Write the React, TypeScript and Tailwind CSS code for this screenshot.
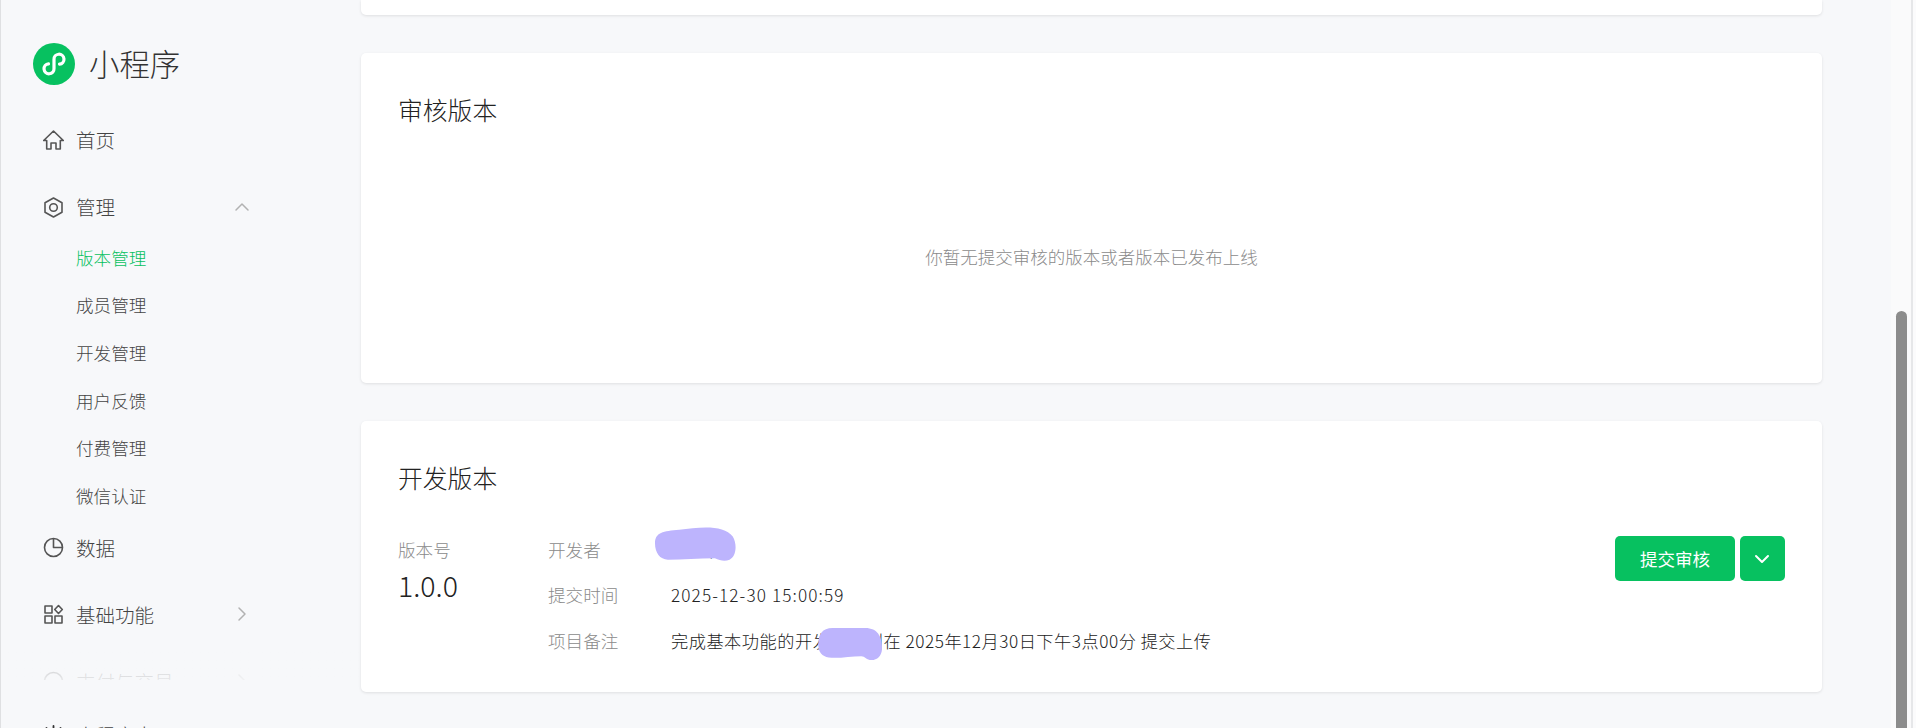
import React from 'react';
import { ChevronDown, ChevronRight, ChevronUp } from 'lucide-react';

const FONT = "font-['Noto_Sans_CJK_SC','Noto_Sans',sans-serif]";

const HomeIcon = () => (
  <svg viewBox="0 0 21 21" className="h-[21px] w-[21px]" fill="none" stroke="#555" strokeWidth="1.600" strokeLinejoin="round">
    <path d="M10.500 1 20.300 10.500h-3v8.500h-4.300v-6h-5v6H3.700v-8.500H.7z" />
  </svg>
);

const HexIcon = () => (
  <svg viewBox="0 0 21 21" className="h-[21px] w-[21px]" fill="none" stroke="#555" strokeWidth="1.600" strokeLinejoin="round">
    <path d="M10.500 1 19 5.800v9.400L10.500 20 2 15.200V5.800z" />
    <circle cx="10.500" cy="10.500" r="3.800" />
  </svg>
);

const PieIcon = () => (
  <svg viewBox="0 0 21 21" className="h-[21px] w-[21px]" fill="none" stroke="#555" strokeWidth="1.600" strokeLinejoin="round">
    <circle cx="10.500" cy="10.500" r="9" />
    <path d="M10.500 1.500v9h9" />
  </svg>
);

const GridIcon = () => (
  <svg viewBox="0 0 21 21" className="h-[21px] w-[21px]" fill="none" stroke="#555" strokeWidth="1.600" strokeLinejoin="round">
    <rect x="2" y="2" width="7" height="7" />
    <path d="m15.500 1.500 3.800 4-3.800 4-3.800-4z" />
    <rect x="2" y="12" width="7" height="7" />
    <rect x="12" y="12" width="7" height="7" />
  </svg>
);

const SmileIcon = () => (
  <svg viewBox="0 0 21 21" className="h-[21px] w-[21px]" fill="none" stroke="#555" strokeWidth="1.600">
    <circle cx="10.500" cy="10.500" r="9" />
  </svg>
);

const SunIcon = () => (
  <svg viewBox="0 0 21 21" className="h-[21px] w-[21px]" fill="none" stroke="#333" strokeWidth="1.800" strokeLinecap="round">
    <path d="M10.500 1v3M3.500 3l2 2.500M17.500 3l-2 2.500M1 9h3M17 9h3" />
    <circle cx="10.500" cy="12" r="4.500" />
  </svg>
);

const Logo = () => (
  <svg viewBox="0 0 42 42" className="h-[42px] w-[42px] shrink-0">
    <circle cx="21" cy="21" r="21" fill="#07c160" />
    <path
      d="M15.500 20.800A5 5 0 1 0 21 25.500v-9a5 5 0 1 1 5.500 4.700"
      fill="none"
      stroke="#fff"
      strokeWidth="3.200"
      strokeLinecap="round"
    />
  </svg>
);

const NavRow = ({
  icon,
  label,
  chevron,
  className = '',
}: {
  icon: React.ReactNode;
  label: string;
  chevron?: 'up' | 'right';
  className?: string;
}) => (
  <div className={`flex h-[54px] items-center pl-[42px] ${className}`}>
    {icon}
    <span className="ml-[12px] text-[19.500px] font-light text-[#444]">{label}</span>
    {chevron === 'up' && <ChevronUp className="absolute left-[229px] h-[24px] w-[24px] text-[#b2b2b2]" strokeWidth={1.500} />}
    {chevron === 'right' && <ChevronRight className="absolute left-[229px] h-[24px] w-[24px] text-[#b2b2b2]" strokeWidth={1.500} />}
  </div>
);

const subItems = ['版本管理', '成员管理', '开发管理', '用户反馈', '付费管理', '微信认证'];

const Sidebar = () => (
  <aside className="flex h-full w-[360px] shrink-0 flex-col">
    <div className="mt-[43px] flex shrink-0 items-center pl-[32px]">
      <Logo />
      <span className="ml-[14px] -mt-[3px] text-[30.400px] leading-[42px] font-light text-[#333]">小程序</span>
    </div>
    <div className="relative mt-[28px] h-[567px] shrink-0 overflow-hidden">
      <NavRow icon={<HomeIcon />} label="首页" />
      <NavRow icon={<HexIcon />} label="管理" chevron="up" className="mt-[13px]" />
      <ul>
        {subItems.map((item, i) => (
          <li
            key={item}
            className={`flex h-[47.700px] items-center pl-[75px] text-[17.600px] font-light ${i === 0 ? 'text-[#07c160]' : 'text-[#444]'}`}
          >
            {item}
          </li>
        ))}
      </ul>
      <NavRow icon={<PieIcon />} label="数据" />
      <NavRow icon={<GridIcon />} label="基础功能" chevron="right" className="mt-[13px]" />
      <NavRow icon={<SmileIcon />} label="支付与交易" chevron="right" className="mt-[13px]" />
      <div className="absolute inset-x-0 bottom-0 h-[30px] bg-gradient-to-b from-[#f7f8fa]/60 to-[#f7f8fa]/90" />
    </div>
    <NavRow icon={<SunIcon />} label="小程序人" chevron="right" className="mt-[28px] shrink-0" />
  </aside>
);

const Blob = ({ className, d }: { className: string; d: string }) => (
  <svg viewBox="0 0 100 50" preserveAspectRatio="none" className={`absolute ${className}`}>
    <path d={d} fill="#bdb4fd" />
  </svg>
);

const Card = ({ title, className = '', children }: { title: string; className?: string; children: React.ReactNode }) => (
  <section className={`rounded-[5px] bg-white px-[37px] pt-[37px] shadow-[0_1px_3px_rgba(0,0,0,0.1)] ${className}`}>
    <h2 className="text-[24.800px] leading-[38px] font-light text-[#222]">{title}</h2>
    {children}
  </section>
);

export default function App() {
  return (
    <div className={`flex h-[728px] w-[1916px] overflow-hidden bg-[#f7f8fa] ${FONT}`}>
      <div className="w-px shrink-0 bg-[#dfe0e2]" />
      <Sidebar />
      <main className="flex w-[1461px] shrink-0 flex-col gap-[38px]">
        <div className="h-[15px] shrink-0 rounded-b-[5px] bg-white shadow-[0_1px_3px_rgba(0,0,0,0.1)]" />

        <Card title="审核版本" className="h-[330px] shrink-0">
          <p className="mt-[111px] text-center text-[17.500px] leading-[36px] font-light text-[#8a8a8a]">
            你暂无提交审核的版本或者版本已发布上线
          </p>
        </Card>

        <Card title="开发版本" className="relative h-[271px] shrink-0">
          <div className="mt-[30.500px] flex items-start text-[17.600px] leading-[45.500px] font-light">
            <div className="w-[150px] shrink-0">
              <div className="text-[#8a8a8a]">版本号</div>
              <div className="-mt-[2px] text-[28.500px] leading-[29px] text-[#222]">1.0.0</div>
            </div>
            <dl className="grid grid-cols-[123px_1fr]">
              <dt className="text-[#8a8a8a]">开发者</dt>
              <dd className="text-[#222]">用户名</dd>
              <dt className="text-[#8a8a8a]">提交时间</dt>
              <dd className="text-[17.200px] tracking-[1.100px] text-[#222]">2025-12-30 15:00:59</dd>
              <dt className="text-[#8a8a8a]">项目备注</dt>
              <dd className="text-[17.200px] tracking-[0.520px] text-[#222]">完成基本功能的开发，计划在 2025年12月30日下午3点00分 提交上传</dd>
            </dl>
            <div className="ml-auto mt-[9.500px] flex gap-[5px] text-[17.500px] font-normal text-white">
              <button className="flex h-[45px] w-[120px] items-center justify-center rounded-[5px] bg-[#07c160]">提交审核</button>
              <button className="flex h-[45px] w-[45px] items-center justify-center rounded-[5px] bg-[#07c160]">
                <ChevronDown className="-ml-[2px] h-[24px] w-[24px]" strokeWidth={2} />
              </button>
            </div>
          </div>
          <Blob
            className="left-[294px] top-[106px] h-[34px] w-[81px]"
            d="M0 24C0 8 10 6 30 4 55 0 85-4 96 14c6 12 4 30-4 34-6 3-12 1-18-2-20 0-40 2-58 2C6 48 0 38 0 24z"
          />
          <Blob
            className="left-[456px] top-[207px] h-[32px] w-[65px]"
            d="M2 26C2 10 8 0 24 0h50c20 0 25 14 26 28 1 14-6 22-16 22-8 0-10-6-16-6-16 0-36 4-50 2C8 44 2 38 2 26z"
          />
        </Card>
      </main>
      <div className="ml-[69px] w-[20px] shrink-0 bg-[#fafafb] pl-[5px]">
        <div className="mt-[311px] h-[417px] w-[11px] rounded-t-full bg-[#8c8c8c]" />
      </div>
      <div className="w-[2px] shrink-0 bg-[#e6e7e9]" />
      <div className="flex-1 bg-[#fbfbfc]" />
    </div>
  );
}
